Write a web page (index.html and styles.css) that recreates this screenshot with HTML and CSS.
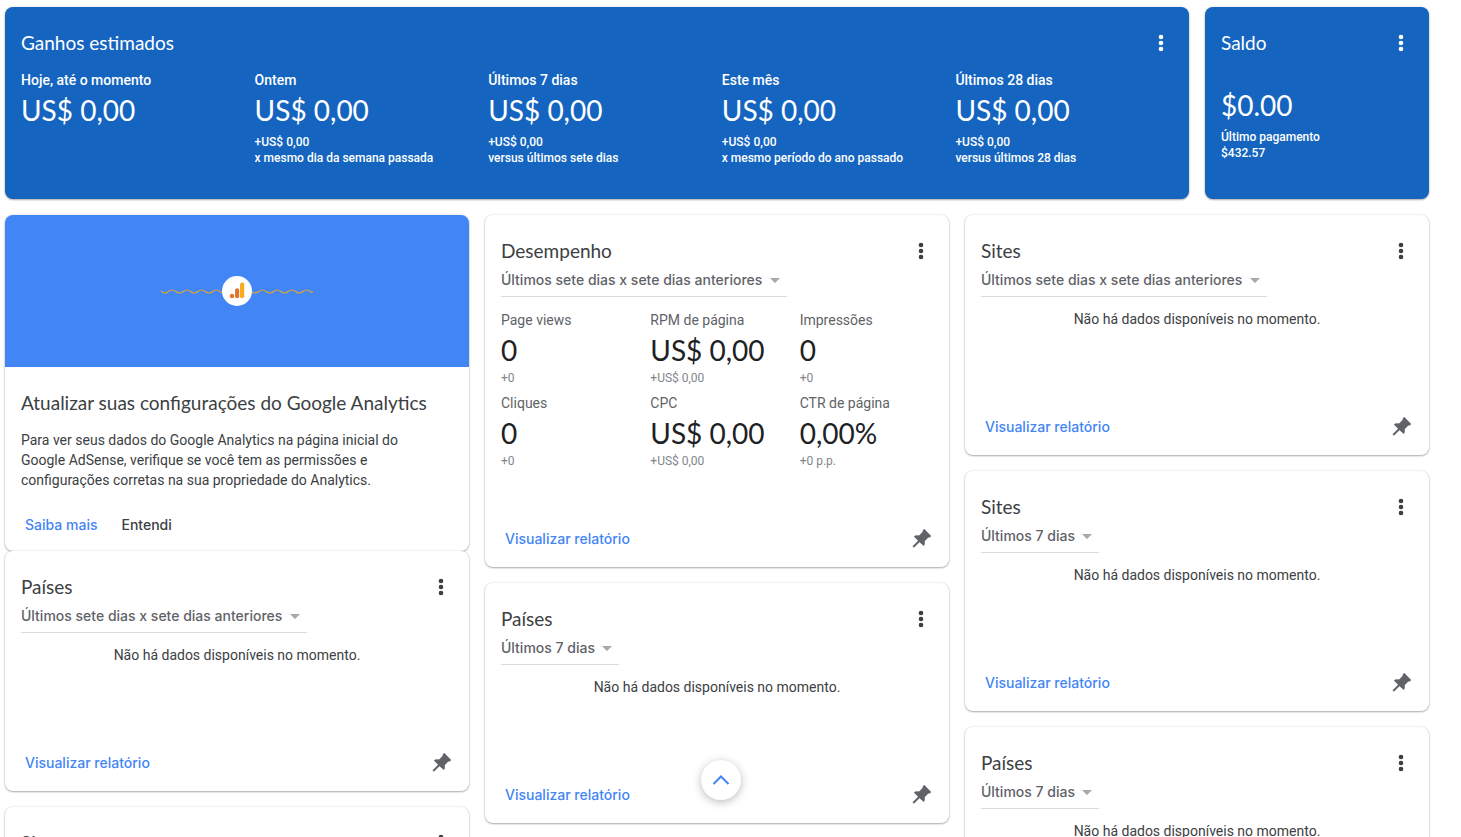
FILE: index.html
```html
<!DOCTYPE html>
<html lang="pt-BR">
<head>
<meta charset="utf-8">
<title>Página inicial</title>
<link rel="stylesheet" href="styles.css">
</head>
<body>
<svg class="defs" aria-hidden="true">
  <symbol id="more" viewBox="0 0 24 24"><circle cx="12" cy="6" r="2.300"/><circle cx="12" cy="12" r="2.300"/><circle cx="12" cy="18" r="2.300"/></symbol>
  <symbol id="pin" viewBox="0 0 24 24"><path d="M15.300 2L22.200 8.900L20.800 10.500L19.300 10.600L15.700 14.200Q16.400 17 14.900 19L10.500 15.200L5.300 20.300L3.800 20.300L3.800 18.900L9 13.700L4.900 9.500Q7 7.700 10 8.600L13.600 5L13.600 3.600Z"/></symbol>
</svg>
<main class="dashboard">
  <section class="card card-blue earnings">
    <header class="card-header"><h2 class="title">Ganhos estimados</h2><button class="icon-button" aria-label="Mais opções"><svg class="icon"><use href="#more"/></svg></button></header>
    <div class="earnings-grid">
      <div><div class="label">Hoje, até o momento</div><div class="value">US$ 0,00</div></div>
      <div><div class="label">Ontem</div><div class="value">US$ 0,00</div><div class="delta">+US$ 0,00<br>x mesmo dia da semana passada</div></div>
      <div><div class="label">Últimos 7 dias</div><div class="value">US$ 0,00</div><div class="delta">+US$ 0,00<br>versus últimos sete dias</div></div>
      <div><div class="label">Este mês</div><div class="value">US$ 0,00</div><div class="delta">+US$ 0,00<br>x mesmo período do ano passado</div></div>
      <div><div class="label">Últimos 28 dias</div><div class="value">US$ 0,00</div><div class="delta">+US$ 0,00<br>versus últimos 28 dias</div></div>
    </div>
  </section>
  <section class="card card-blue balance">
    <header class="card-header"><h2 class="title">Saldo</h2><button class="icon-button" aria-label="Mais opções"><svg class="icon"><use href="#more"/></svg></button></header>
    <div class="balance-body"><div class="value">$0.00</div><div class="delta">Último pagamento<br>$432.57</div></div>
  </section>

  <div class="column">
    <div class="stack">
      <section class="card promo">
        <div class="promo-banner">
          <svg class="promo-art" viewBox="0 0 152 30" aria-hidden="true">
            <path class="wave" d="M0 14.500Q2 17 4 17C7.300 17 7.800 14 11.200 14S15.100 17 18.500 17S22.500 14 25.900 14S29.800 17 33.200 17S37.200 14 40.600 14S44.500 17 47.900 17S51.900 14 55.300 14S59 16.500 61 16.500"/>
            <path class="wave" d="M90 15.500Q92 17 94 17C97.300 17 98.300 14 101.500 14S105.500 17 108.900 17S112.800 14 116.200 14S120.200 17 123.600 17S127.500 14 130.900 14S134.900 17 138.300 17S142.200 14 145.600 14S149.500 16.500 152 16.500"/>
            <circle class="disc" cx="76" cy="15" r="15"/>
            <circle class="bar-dark" cx="71" cy="20" r="2.200"/>
            <rect class="bar-dark" x="74" y="12.200" width="4.200" height="10" rx="2"/>
            <rect class="bar-light" x="79" y="6.500" width="4.200" height="15.700" rx="2"/>
          </svg>
        </div>
        <div class="promo-body">
          <h2 class="title">Atualizar suas configurações do Google Analytics</h2>
          <p class="promo-text">Para ver seus dados do Google Analytics na página inicial do Google AdSense, verifique se você tem as permissões e configurações corretas na sua propriedade do Analytics.</p>
          <div class="promo-actions"><a class="action" href="#">Saiba mais</a><button class="action action-dark">Entendi</button></div>
        </div>
      </section>
      <section class="card">
        <header class="card-header"><h2 class="title">Países</h2><button class="icon-button" aria-label="Mais opções"><svg class="icon"><use href="#more"/></svg></button></header>
        <div class="period"><select aria-label="Período"><option>Últimos sete dias x sete dias anteriores</option></select></div>
        <p class="empty">Não há dados disponíveis no momento.</p>
        <footer class="card-footer"><a class="action" href="#">Visualizar relatório</a><button class="icon-button pin" aria-label="Fixar"><svg class="icon"><use href="#pin"/></svg></button></footer>
      </section>
    </div>
    <section class="card">
      <header class="card-header"><h2 class="title">Sites</h2><button class="icon-button" aria-label="Mais opções"><svg class="icon"><use href="#more"/></svg></button></header>
    </section>
  </div>

  <div class="column">
    <section class="card performance">
      <header class="card-header"><h2 class="title">Desempenho</h2><button class="icon-button" aria-label="Mais opções"><svg class="icon"><use href="#more"/></svg></button></header>
      <div class="period"><select aria-label="Período"><option>Últimos sete dias x sete dias anteriores</option></select></div>
      <div class="metrics">
        <div><div class="label">Page views</div><div class="value">0</div><div class="delta">+0</div></div>
        <div><div class="label">RPM de página</div><div class="value">US$ 0,00</div><div class="delta">+US$ 0,00</div></div>
        <div><div class="label">Impressões</div><div class="value">0</div><div class="delta">+0</div></div>
        <div><div class="label">Cliques</div><div class="value">0</div><div class="delta">+0</div></div>
        <div><div class="label">CPC</div><div class="value">US$ 0,00</div><div class="delta">+US$ 0,00</div></div>
        <div><div class="label">CTR de página</div><div class="value">0,00%</div><div class="delta">+0 p.p.</div></div>
      </div>
      <footer class="card-footer"><a class="action" href="#">Visualizar relatório</a><button class="icon-button pin" aria-label="Fixar"><svg class="icon"><use href="#pin"/></svg></button></footer>
    </section>
    <section class="card">
      <header class="card-header"><h2 class="title">Países</h2><button class="icon-button" aria-label="Mais opções"><svg class="icon"><use href="#more"/></svg></button></header>
      <div class="period"><select aria-label="Período"><option>Últimos 7 dias</option></select></div>
      <p class="empty">Não há dados disponíveis no momento.</p>
      <footer class="card-footer"><a class="action" href="#">Visualizar relatório</a><button class="icon-button pin" aria-label="Fixar"><svg class="icon"><use href="#pin"/></svg></button></footer>
    </section>
  </div>

  <div class="column">
    <section class="card">
      <header class="card-header"><h2 class="title">Sites</h2><button class="icon-button" aria-label="Mais opções"><svg class="icon"><use href="#more"/></svg></button></header>
      <div class="period"><select aria-label="Período"><option>Últimos sete dias x sete dias anteriores</option></select></div>
      <p class="empty">Não há dados disponíveis no momento.</p>
      <footer class="card-footer"><a class="action" href="#">Visualizar relatório</a><button class="icon-button pin" aria-label="Fixar"><svg class="icon"><use href="#pin"/></svg></button></footer>
    </section>
    <section class="card">
      <header class="card-header"><h2 class="title">Sites</h2><button class="icon-button" aria-label="Mais opções"><svg class="icon"><use href="#more"/></svg></button></header>
      <div class="period"><select aria-label="Período"><option>Últimos 7 dias</option></select></div>
      <p class="empty">Não há dados disponíveis no momento.</p>
      <footer class="card-footer"><a class="action" href="#">Visualizar relatório</a><button class="icon-button pin" aria-label="Fixar"><svg class="icon"><use href="#pin"/></svg></button></footer>
    </section>
    <section class="card">
      <header class="card-header"><h2 class="title">Países</h2><button class="icon-button" aria-label="Mais opções"><svg class="icon"><use href="#more"/></svg></button></header>
      <div class="period"><select aria-label="Período"><option>Últimos 7 dias</option></select></div>
      <p class="empty">Não há dados disponíveis no momento.</p>
    </section>
  </div>
  <button class="scroll-top" aria-label="Voltar ao topo"><svg class="icon" viewBox="0 0 24 24"><path d="M4.500 16L12 8.500L19.500 16"/></svg></button>
</main>
</body>
</html>
```

FILE: styles.css
```css
* { box-sizing: border-box; }
body {
  margin: 0;
  height: 100vh;
  overflow: hidden;
  background: #fff;
  color: #3c4043;
  font: 14px/20px Roboto, sans-serif;
}
.defs { display: none; }
button { margin: 0; border: 0; background: none; cursor: pointer; }

.dashboard {
  position: relative;
  height: 100vh;
  margin-right: 19px;
  padding: 7px 13px 0 5px;
  display: grid;
  grid-template-columns: repeat(6, minmax(0, 1fr));
  grid-template-rows: auto 1fr;
  gap: 16px;
  align-items: start;
}
.column {
  grid-column: span 2;
  display: flex;
  flex-direction: column;
  gap: 16px;
}
.card {
  display: flex;
  flex-direction: column;
  min-height: 240px;
  padding: 24px 16px 10px;
  border-radius: 8px;
  background: #fff;
  box-shadow: 0 1px 2px rgba(60, 64, 67, .4), 0 0 2px rgba(60, 64, 67, .2);
}
.card-header, .card-footer {
  display: flex;
  align-items: center;
  justify-content: space-between;
}
.card-footer { margin-top: auto; }
.title {
  margin: 0;
  font: 400 19px/24px Lato, sans-serif;
}
.icon-button {
  display: flex;
  padding: 0;
  color: #3c4043;
}
.icon {
  width: 24px;
  height: 24px;
  fill: currentColor;
}
.pin { color: #5f6368; }

.period {
  position: relative;
  align-self: flex-start;
  display: flex;
  border-bottom: 1px solid #dadce0;
}
.period select {
  appearance: none;
  height: 33px;
  padding: 0 24px 0 0;
  border: 0;
  background: none;
  color: #5f6368;
  font: 500 14px/20px Inter, sans-serif;
}
.period::after {
  content: "";
  position: absolute;
  top: 15px;
  right: 7px;
  border: 5px solid transparent;
  border-top-color: #a6a8ab;
  border-bottom: 0;
  pointer-events: none;
}
.empty {
  margin: 12px 0 0;
  text-align: center;
}
.action {
  padding: 0 4px;
  color: #4285f4;
  font: 500 14px/36px Inter, sans-serif;
  text-decoration: none;
}
.action-dark { color: #3c4043; }

.value {
  color: #202124;
  font: 400 28px/40px Lato, sans-serif;
}
.delta { font-size: 12px; line-height: 16px; }

.card-blue {
  min-height: 192px;
  background: #1565c0;
  color: #fff;
  font-weight: 500;
}
.card-blue .value, .card-blue .icon-button { color: #fff; }
.card-blue .delta { margin-top: 4px; }
.earnings { grid-column: span 5; }
.earnings-grid {
  display: grid;
  grid-template-columns: repeat(5, 1fr);
  margin: 15px -16px 0 0;
}
.balance-body { margin-top: 30px; }

.performance { min-height: 352px; }
.metrics {
  display: grid;
  grid-template-columns: repeat(3, 1fr);
  row-gap: 7px;
  margin: 13px -16px 0 0;
  color: #5f6368;
}
.metrics .delta { color: #80868b; }

.promo { min-height: 0; padding: 0; }
.promo-banner {
  display: flex;
  align-items: center;
  justify-content: center;
  height: 152px;
  border-radius: 8px 8px 0 0;
  background: #4285f4;
}
.promo-art { width: 152px; height: 30px; }
.wave { fill: none; stroke: #e5a52f; stroke-width: 1.2; }
.disc { fill: #fff; }
.bar-dark { fill: #e37429; }
.bar-light { fill: #f9ab1f; }
.promo-body { padding: 24px 16px 8px; }
.promo-text { margin: 15px 0 17px; padding-right: 48px; }
.promo-actions { display: flex; gap: 16px; }

.scroll-top {
  position: absolute;
  bottom: 37px;
  left: 50%;
  display: grid;
  place-items: center;
  width: 40px;
  height: 40px;
  margin-left: -20px;
  padding: 0;
  border-radius: 50%;
  background: #fff;
  box-shadow: 0 2px 8px rgba(60, 64, 67, .35);
}
.scroll-top .icon { fill: none; stroke: #4285f4; stroke-width: 2; }
```
